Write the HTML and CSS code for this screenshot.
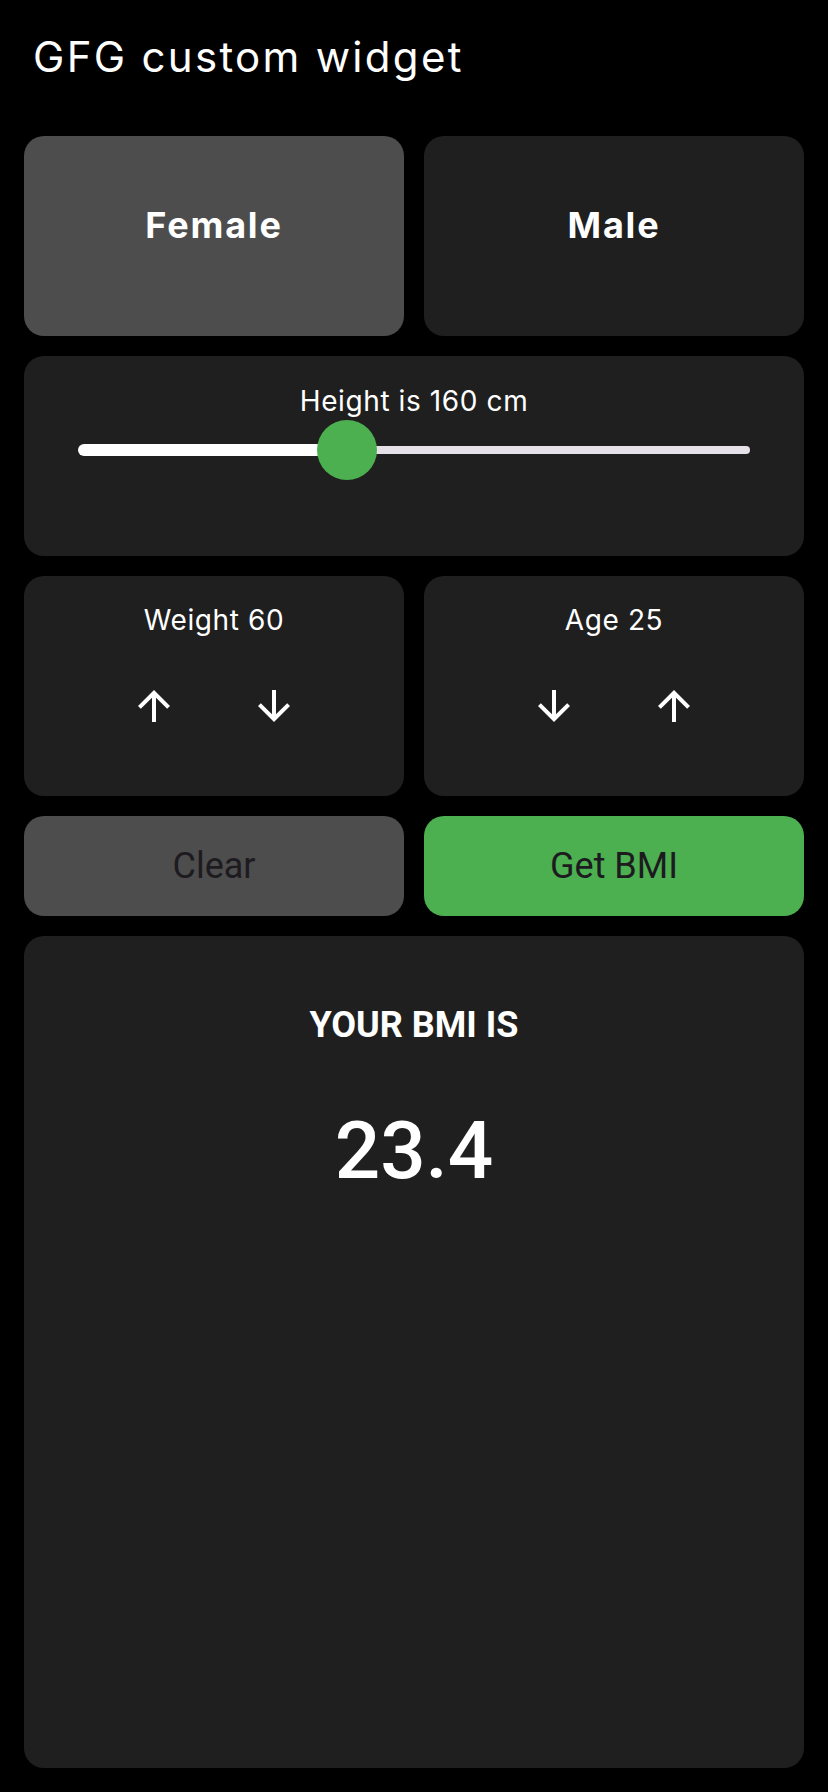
FILE: index.html
```html
<!DOCTYPE html>
<html lang="en">
<head>
<meta charset="utf-8">
<title>GFG custom widget</title>
<link rel="stylesheet" href="styles.css">
</head>
<body>
<header class="appbar">GFG custom widget</header>
<main class="content">
  <section class="row row-gender">
    <div class="card card-selected gender"><span class="gender-label">Female</span></div>
    <div class="card gender"><span class="gender-label">Male</span></div>
  </section>

  <section class="card height-card">
    <div class="label">Height is 160 cm</div>
    <div class="slider">
      <div class="track-active" style="width:40%"></div>
      <div class="track-inactive"></div>
      <div class="thumb" style="left:40%"></div>
    </div>
  </section>

  <section class="row row-counters">
    <div class="card counter">
      <div class="label">Weight 60</div>
      <div class="icons">
        <svg class="icon" viewBox="0 0 24 24" width="48" height="48"><path d="M4 12l1.41 1.41L11 7.83V20h2V7.83l5.58 5.59L20 12l-8-8-8 8z"/></svg>
        <svg class="icon" viewBox="0 0 24 24" width="48" height="48"><path d="M20 12l-1.41-1.41L13 16.17V4h-2v12.17l-5.58-5.59L4 12l8 8 8-8z"/></svg>
      </div>
    </div>
    <div class="card counter">
      <div class="label">Age 25</div>
      <div class="icons">
        <svg class="icon" viewBox="0 0 24 24" width="48" height="48"><path d="M20 12l-1.41-1.41L13 16.17V4h-2v12.17l-5.58-5.59L4 12l8 8 8-8z"/></svg>
        <svg class="icon" viewBox="0 0 24 24" width="48" height="48"><path d="M4 12l1.41 1.41L11 7.83V20h2V7.83l5.58 5.59L20 12l-8-8-8 8z"/></svg>
      </div>
    </div>
  </section>

  <section class="row row-buttons">
    <button class="btn btn-clear">Clear</button>
    <button class="btn btn-get">Get BMI</button>
  </section>

  <section class="card result">
    <div class="result-title">YOUR BMI IS</div>
    <div class="result-value">23.4</div>
  </section>
</main>
</body>
</html>
```

FILE: styles.css
```css
* { box-sizing: border-box; }

html, body {
  margin: 0;
  padding: 0;
  background: #000;
}

body {
  width: 828px;
  height: 1792px;
  display: flex;
  flex-direction: column;
  font-family: Inter, "Noto Sans", sans-serif;
  color: #fff;
}

.appbar {
  height: 112px;
  line-height: 113px;
  padding-left: 33px;
  font-size: 42px;
  font-weight: 400;
  letter-spacing: 2.3px;
  color: #fff;
}

.content {
  flex: 1;
  display: flex;
  flex-direction: column;
  gap: 20px;
  padding: 24px;
}

.row {
  display: grid;
  grid-template-columns: 1fr 1fr;
  gap: 20px;
}

.card {
  background: #1f1f1f;
  border-radius: 20px;
}

.card-selected {
  background: #4d4d4d;
}

.gender {
  height: 200px;
  display: flex;
  align-items: center;
  justify-content: center;
  padding-bottom: 22px;
}

.gender-label {
  font-size: 36px;
  line-height: 36px;
  font-weight: 700;
  letter-spacing: 1.8px;
}

.label {
  font-size: 28px;
  line-height: 28px;
  text-align: center;
  letter-spacing: 0.6px;
}

.height-card {
  height: 200px;
  padding: 31px 54px 0;
}

.slider {
  position: relative;
  margin-top: 5px;
  height: 60px;
  display: flex;
  align-items: center;
}

.track-active {
  height: 12px;
  background: #fff;
  border-radius: 6px 0 0 6px;
}

.track-inactive {
  flex: 1;
  height: 8px;
  background: #e6e0e9;
  border-radius: 0 4px 4px 0;
}

.thumb {
  position: absolute;
  top: 0;
  width: 60px;
  height: 60px;
  margin-left: -30px;
  border-radius: 50%;
  background: #4caf50;
}

.counter {
  height: 220px;
  padding-top: 30px;
}

.icons {
  margin-top: 48px;
  display: flex;
  justify-content: center;
  gap: 72px;
}

.icon {
  display: block;
  fill: #fff;
}

.btn {
  height: 100px;
  border: 0;
  border-radius: 20px;
  font-family: Roboto, "Liberation Sans", sans-serif;
  font-size: 36px;
  font-weight: 400;
  color: #1d1b20;
  padding: 0;
}

.btn-clear { background: #4d4d4d; }
.btn-get { background: #4caf50; }

.result {
  flex: 1;
  display: flex;
  flex-direction: column;
  align-items: center;
  padding-top: 71px;
  font-family: Roboto, "Liberation Sans", sans-serif;
}

.result-title {
  font-size: 36px;
  line-height: 36px;
  font-weight: 700;
}

.result-value {
  margin-top: 68px;
  font-size: 80px;
  line-height: 80px;
  font-weight: 500;
}
```
